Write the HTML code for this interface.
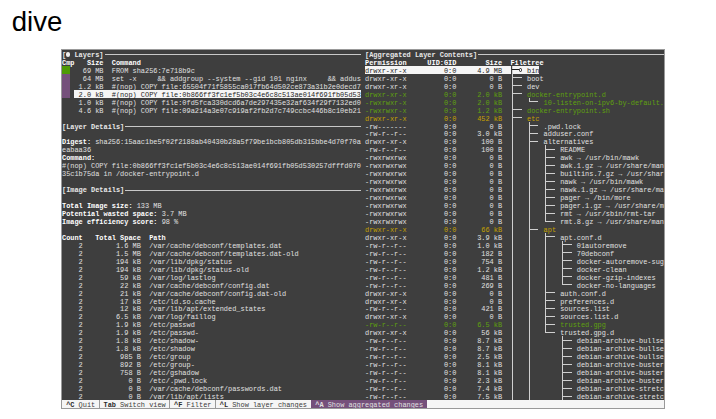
<!DOCTYPE html><html><head><meta charset="utf-8"><style>html,body{margin:0;padding:0;background:#fff;width:716px;height:419px;overflow:hidden}#title{position:absolute;left:11.70px;top:8.40px;font-family:"Liberation Sans",sans-serif;font-size:27.60px;color:#000;line-height:1;white-space:pre}#term{position:absolute;left:62.000px;top:50.000px;width:601.996px;height:358.020px;background:#3e3e3e;overflow:hidden}.r{position:absolute;left:0;height:7.956px;line-height:7.956px;white-space:pre;font-family:"Liberation Mono",monospace;font-size:7.300px}.s{position:absolute;top:0}.n{color:#e0e0e0}.b{color:#ffffff;font-weight:bold}.t{color:#e8e8e8;font-weight:bold}.h{color:#1e1e1e}.g{color:#5fa00f}.y{color:#c4a000}.sb{color:#2a2a2a;font-weight:bold}.sn{color:#3c3c3c}.pb{color:#e0e0e0;font-weight:bold}.pn{color:#e0e0e0}.q{position:absolute}</style></head><body><div id="title">dive</div><div style="position:absolute;left:61.000px;top:49.000px;width:603.996px;height:360.020px;background:#999"></div><div id="term"><div class="q" style="left:12.455px;top:39.780px;width:286.467px;height:7.956px;background:#f5f5f5"></div><div class="q" style="left:0.000px;top:15.912px;width:8.303px;height:7.956px;background:#4e9a06"></div><div class="q" style="left:0.000px;top:23.868px;width:8.303px;height:7.956px;background:#75507b"></div><div class="q" style="left:0.000px;top:31.824px;width:8.303px;height:7.956px;background:#75507b"></div><div class="q" style="left:0.000px;top:39.780px;width:8.303px;height:7.956px;background:#75507b"></div><div class="q" style="left:303.074px;top:15.912px;width:146.347px;height:7.956px;background:#f5f5f5"></div><div class="q" style="left:451.497px;top:15.912px;width:25.948px;height:7.956px;background:#f5f5f5"></div><div class="q" style="left:0.000px;top:350.064px;width:601.996px;height:7.956px;background:#f5f5f5"></div><div class="q" style="left:249.102px;top:350.064px;width:116.248px;height:7.956px;background:#75507b"></div><div class="q" style="left:42.517px;top:4.278px;width:256.405px;height:1.000px;background:#c8c8c8"></div><div class="q" style="left:63.276px;top:75.882px;width:235.647px;height:1.000px;background:#c8c8c8"></div><div class="q" style="left:63.276px;top:139.530px;width:235.647px;height:1.000px;background:#c8c8c8"></div><div class="q" style="left:416.170px;top:4.278px;width:185.826px;height:1.000px;background:#c8c8c8"></div><div class="q" style="left:449.959px;top:15.912px;width:1.000px;height:7.956px;background:#d0d0d0"></div><div class="q" style="left:449.959px;top:19.390px;width:6.728px;height:1.000px;background:#1e1e1e"></div><div class="q" style="left:449.959px;top:23.868px;width:1.000px;height:7.956px;background:#d0d0d0"></div><div class="q" style="left:449.959px;top:27.346px;width:9.879px;height:1.000px;background:#d0d0d0"></div><div class="q" style="left:449.959px;top:31.824px;width:1.000px;height:7.956px;background:#d0d0d0"></div><div class="q" style="left:449.959px;top:35.302px;width:9.879px;height:1.000px;background:#d0d0d0"></div><div class="q" style="left:449.959px;top:39.780px;width:1.000px;height:7.956px;background:#d0d0d0"></div><div class="q" style="left:449.959px;top:43.258px;width:9.879px;height:1.000px;background:#d0d0d0"></div><div class="q" style="left:449.959px;top:47.736px;width:1.000px;height:7.956px;background:#d0d0d0"></div><div class="q" style="left:466.566px;top:47.736px;width:1.000px;height:4.478px;background:#d0d0d0"></div><div class="q" style="left:466.566px;top:51.214px;width:9.879px;height:1.000px;background:#d0d0d0"></div><div class="q" style="left:449.959px;top:55.692px;width:1.000px;height:7.956px;background:#d0d0d0"></div><div class="q" style="left:449.959px;top:59.170px;width:9.879px;height:1.000px;background:#d0d0d0"></div><div class="q" style="left:449.959px;top:63.648px;width:1.000px;height:7.956px;background:#d0d0d0"></div><div class="q" style="left:449.959px;top:67.126px;width:9.879px;height:1.000px;background:#d0d0d0"></div><div class="q" style="left:449.959px;top:71.604px;width:1.000px;height:7.956px;background:#d0d0d0"></div><div class="q" style="left:466.566px;top:71.604px;width:1.000px;height:7.956px;background:#d0d0d0"></div><div class="q" style="left:466.566px;top:75.082px;width:9.879px;height:1.000px;background:#d0d0d0"></div><div class="q" style="left:449.959px;top:79.560px;width:1.000px;height:7.956px;background:#d0d0d0"></div><div class="q" style="left:466.566px;top:79.560px;width:1.000px;height:7.956px;background:#d0d0d0"></div><div class="q" style="left:466.566px;top:83.038px;width:9.879px;height:1.000px;background:#d0d0d0"></div><div class="q" style="left:449.959px;top:87.516px;width:1.000px;height:7.956px;background:#d0d0d0"></div><div class="q" style="left:466.566px;top:87.516px;width:1.000px;height:7.956px;background:#d0d0d0"></div><div class="q" style="left:466.566px;top:90.994px;width:9.879px;height:1.000px;background:#d0d0d0"></div><div class="q" style="left:449.959px;top:95.472px;width:1.000px;height:7.956px;background:#d0d0d0"></div><div class="q" style="left:466.566px;top:95.472px;width:1.000px;height:7.956px;background:#d0d0d0"></div><div class="q" style="left:483.173px;top:95.472px;width:1.000px;height:7.956px;background:#d0d0d0"></div><div class="q" style="left:483.173px;top:98.950px;width:9.879px;height:1.000px;background:#d0d0d0"></div><div class="q" style="left:449.959px;top:103.428px;width:1.000px;height:7.956px;background:#d0d0d0"></div><div class="q" style="left:466.566px;top:103.428px;width:1.000px;height:7.956px;background:#d0d0d0"></div><div class="q" style="left:483.173px;top:103.428px;width:1.000px;height:7.956px;background:#d0d0d0"></div><div class="q" style="left:483.173px;top:106.906px;width:9.879px;height:1.000px;background:#d0d0d0"></div><div class="q" style="left:449.959px;top:111.384px;width:1.000px;height:7.956px;background:#d0d0d0"></div><div class="q" style="left:466.566px;top:111.384px;width:1.000px;height:7.956px;background:#d0d0d0"></div><div class="q" style="left:483.173px;top:111.384px;width:1.000px;height:7.956px;background:#d0d0d0"></div><div class="q" style="left:483.173px;top:114.862px;width:9.879px;height:1.000px;background:#d0d0d0"></div><div class="q" style="left:449.959px;top:119.340px;width:1.000px;height:7.956px;background:#d0d0d0"></div><div class="q" style="left:466.566px;top:119.340px;width:1.000px;height:7.956px;background:#d0d0d0"></div><div class="q" style="left:483.173px;top:119.340px;width:1.000px;height:7.956px;background:#d0d0d0"></div><div class="q" style="left:483.173px;top:122.818px;width:9.879px;height:1.000px;background:#d0d0d0"></div><div class="q" style="left:449.959px;top:127.296px;width:1.000px;height:7.956px;background:#d0d0d0"></div><div class="q" style="left:466.566px;top:127.296px;width:1.000px;height:7.956px;background:#d0d0d0"></div><div class="q" style="left:483.173px;top:127.296px;width:1.000px;height:7.956px;background:#d0d0d0"></div><div class="q" style="left:483.173px;top:130.774px;width:9.879px;height:1.000px;background:#d0d0d0"></div><div class="q" style="left:449.959px;top:135.252px;width:1.000px;height:7.956px;background:#d0d0d0"></div><div class="q" style="left:466.566px;top:135.252px;width:1.000px;height:7.956px;background:#d0d0d0"></div><div class="q" style="left:483.173px;top:135.252px;width:1.000px;height:7.956px;background:#d0d0d0"></div><div class="q" style="left:483.173px;top:138.730px;width:9.879px;height:1.000px;background:#d0d0d0"></div><div class="q" style="left:449.959px;top:143.208px;width:1.000px;height:7.956px;background:#d0d0d0"></div><div class="q" style="left:466.566px;top:143.208px;width:1.000px;height:7.956px;background:#d0d0d0"></div><div class="q" style="left:483.173px;top:143.208px;width:1.000px;height:7.956px;background:#d0d0d0"></div><div class="q" style="left:483.173px;top:146.686px;width:9.879px;height:1.000px;background:#d0d0d0"></div><div class="q" style="left:449.959px;top:151.164px;width:1.000px;height:7.956px;background:#d0d0d0"></div><div class="q" style="left:466.566px;top:151.164px;width:1.000px;height:7.956px;background:#d0d0d0"></div><div class="q" style="left:483.173px;top:151.164px;width:1.000px;height:7.956px;background:#d0d0d0"></div><div class="q" style="left:483.173px;top:154.642px;width:9.879px;height:1.000px;background:#d0d0d0"></div><div class="q" style="left:449.959px;top:159.120px;width:1.000px;height:7.956px;background:#d0d0d0"></div><div class="q" style="left:466.566px;top:159.120px;width:1.000px;height:7.956px;background:#d0d0d0"></div><div class="q" style="left:483.173px;top:159.120px;width:1.000px;height:7.956px;background:#d0d0d0"></div><div class="q" style="left:483.173px;top:162.598px;width:9.879px;height:1.000px;background:#d0d0d0"></div><div class="q" style="left:449.959px;top:167.076px;width:1.000px;height:7.956px;background:#d0d0d0"></div><div class="q" style="left:466.566px;top:167.076px;width:1.000px;height:7.956px;background:#d0d0d0"></div><div class="q" style="left:483.173px;top:167.076px;width:1.000px;height:4.478px;background:#d0d0d0"></div><div class="q" style="left:483.173px;top:170.554px;width:9.879px;height:1.000px;background:#d0d0d0"></div><div class="q" style="left:449.959px;top:175.032px;width:1.000px;height:7.956px;background:#d0d0d0"></div><div class="q" style="left:466.566px;top:175.032px;width:1.000px;height:7.956px;background:#d0d0d0"></div><div class="q" style="left:466.566px;top:178.510px;width:9.879px;height:1.000px;background:#d0d0d0"></div><div class="q" style="left:449.959px;top:182.988px;width:1.000px;height:7.956px;background:#d0d0d0"></div><div class="q" style="left:466.566px;top:182.988px;width:1.000px;height:7.956px;background:#d0d0d0"></div><div class="q" style="left:483.173px;top:182.988px;width:1.000px;height:7.956px;background:#d0d0d0"></div><div class="q" style="left:483.173px;top:186.466px;width:9.879px;height:1.000px;background:#d0d0d0"></div><div class="q" style="left:449.959px;top:190.944px;width:1.000px;height:7.956px;background:#d0d0d0"></div><div class="q" style="left:466.566px;top:190.944px;width:1.000px;height:7.956px;background:#d0d0d0"></div><div class="q" style="left:483.173px;top:190.944px;width:1.000px;height:7.956px;background:#d0d0d0"></div><div class="q" style="left:499.780px;top:190.944px;width:1.000px;height:7.956px;background:#d0d0d0"></div><div class="q" style="left:499.780px;top:194.422px;width:9.879px;height:1.000px;background:#d0d0d0"></div><div class="q" style="left:449.959px;top:198.900px;width:1.000px;height:7.956px;background:#d0d0d0"></div><div class="q" style="left:466.566px;top:198.900px;width:1.000px;height:7.956px;background:#d0d0d0"></div><div class="q" style="left:483.173px;top:198.900px;width:1.000px;height:7.956px;background:#d0d0d0"></div><div class="q" style="left:499.780px;top:198.900px;width:1.000px;height:7.956px;background:#d0d0d0"></div><div class="q" style="left:499.780px;top:202.378px;width:9.879px;height:1.000px;background:#d0d0d0"></div><div class="q" style="left:449.959px;top:206.856px;width:1.000px;height:7.956px;background:#d0d0d0"></div><div class="q" style="left:466.566px;top:206.856px;width:1.000px;height:7.956px;background:#d0d0d0"></div><div class="q" style="left:483.173px;top:206.856px;width:1.000px;height:7.956px;background:#d0d0d0"></div><div class="q" style="left:499.780px;top:206.856px;width:1.000px;height:7.956px;background:#d0d0d0"></div><div class="q" style="left:499.780px;top:210.334px;width:9.879px;height:1.000px;background:#d0d0d0"></div><div class="q" style="left:449.959px;top:214.812px;width:1.000px;height:7.956px;background:#d0d0d0"></div><div class="q" style="left:466.566px;top:214.812px;width:1.000px;height:7.956px;background:#d0d0d0"></div><div class="q" style="left:483.173px;top:214.812px;width:1.000px;height:7.956px;background:#d0d0d0"></div><div class="q" style="left:499.780px;top:214.812px;width:1.000px;height:7.956px;background:#d0d0d0"></div><div class="q" style="left:499.780px;top:218.290px;width:9.879px;height:1.000px;background:#d0d0d0"></div><div class="q" style="left:449.959px;top:222.768px;width:1.000px;height:7.956px;background:#d0d0d0"></div><div class="q" style="left:466.566px;top:222.768px;width:1.000px;height:7.956px;background:#d0d0d0"></div><div class="q" style="left:483.173px;top:222.768px;width:1.000px;height:7.956px;background:#d0d0d0"></div><div class="q" style="left:499.780px;top:222.768px;width:1.000px;height:7.956px;background:#d0d0d0"></div><div class="q" style="left:499.780px;top:226.246px;width:9.879px;height:1.000px;background:#d0d0d0"></div><div class="q" style="left:449.959px;top:230.724px;width:1.000px;height:7.956px;background:#d0d0d0"></div><div class="q" style="left:466.566px;top:230.724px;width:1.000px;height:7.956px;background:#d0d0d0"></div><div class="q" style="left:483.173px;top:230.724px;width:1.000px;height:7.956px;background:#d0d0d0"></div><div class="q" style="left:499.780px;top:230.724px;width:1.000px;height:4.478px;background:#d0d0d0"></div><div class="q" style="left:499.780px;top:234.202px;width:9.879px;height:1.000px;background:#d0d0d0"></div><div class="q" style="left:449.959px;top:238.680px;width:1.000px;height:7.956px;background:#d0d0d0"></div><div class="q" style="left:466.566px;top:238.680px;width:1.000px;height:7.956px;background:#d0d0d0"></div><div class="q" style="left:483.173px;top:238.680px;width:1.000px;height:7.956px;background:#d0d0d0"></div><div class="q" style="left:483.173px;top:242.158px;width:9.879px;height:1.000px;background:#d0d0d0"></div><div class="q" style="left:449.959px;top:246.636px;width:1.000px;height:7.956px;background:#d0d0d0"></div><div class="q" style="left:466.566px;top:246.636px;width:1.000px;height:7.956px;background:#d0d0d0"></div><div class="q" style="left:483.173px;top:246.636px;width:1.000px;height:7.956px;background:#d0d0d0"></div><div class="q" style="left:483.173px;top:250.114px;width:9.879px;height:1.000px;background:#d0d0d0"></div><div class="q" style="left:449.959px;top:254.592px;width:1.000px;height:7.956px;background:#d0d0d0"></div><div class="q" style="left:466.566px;top:254.592px;width:1.000px;height:7.956px;background:#d0d0d0"></div><div class="q" style="left:483.173px;top:254.592px;width:1.000px;height:7.956px;background:#d0d0d0"></div><div class="q" style="left:483.173px;top:258.070px;width:9.879px;height:1.000px;background:#d0d0d0"></div><div class="q" style="left:449.959px;top:262.548px;width:1.000px;height:7.956px;background:#d0d0d0"></div><div class="q" style="left:466.566px;top:262.548px;width:1.000px;height:7.956px;background:#d0d0d0"></div><div class="q" style="left:483.173px;top:262.548px;width:1.000px;height:7.956px;background:#d0d0d0"></div><div class="q" style="left:483.173px;top:266.026px;width:9.879px;height:1.000px;background:#d0d0d0"></div><div class="q" style="left:449.959px;top:270.504px;width:1.000px;height:7.956px;background:#d0d0d0"></div><div class="q" style="left:466.566px;top:270.504px;width:1.000px;height:7.956px;background:#d0d0d0"></div><div class="q" style="left:483.173px;top:270.504px;width:1.000px;height:7.956px;background:#d0d0d0"></div><div class="q" style="left:483.173px;top:273.982px;width:9.879px;height:1.000px;background:#d0d0d0"></div><div class="q" style="left:449.959px;top:278.460px;width:1.000px;height:7.956px;background:#d0d0d0"></div><div class="q" style="left:466.566px;top:278.460px;width:1.000px;height:7.956px;background:#d0d0d0"></div><div class="q" style="left:483.173px;top:278.460px;width:1.000px;height:4.478px;background:#d0d0d0"></div><div class="q" style="left:483.173px;top:281.938px;width:9.879px;height:1.000px;background:#d0d0d0"></div><div class="q" style="left:449.959px;top:286.416px;width:1.000px;height:7.956px;background:#d0d0d0"></div><div class="q" style="left:466.566px;top:286.416px;width:1.000px;height:7.956px;background:#d0d0d0"></div><div class="q" style="left:499.780px;top:286.416px;width:1.000px;height:7.956px;background:#d0d0d0"></div><div class="q" style="left:499.780px;top:289.894px;width:9.879px;height:1.000px;background:#d0d0d0"></div><div class="q" style="left:449.959px;top:294.372px;width:1.000px;height:7.956px;background:#d0d0d0"></div><div class="q" style="left:466.566px;top:294.372px;width:1.000px;height:7.956px;background:#d0d0d0"></div><div class="q" style="left:499.780px;top:294.372px;width:1.000px;height:7.956px;background:#d0d0d0"></div><div class="q" style="left:499.780px;top:297.850px;width:9.879px;height:1.000px;background:#d0d0d0"></div><div class="q" style="left:449.959px;top:302.328px;width:1.000px;height:7.956px;background:#d0d0d0"></div><div class="q" style="left:466.566px;top:302.328px;width:1.000px;height:7.956px;background:#d0d0d0"></div><div class="q" style="left:499.780px;top:302.328px;width:1.000px;height:7.956px;background:#d0d0d0"></div><div class="q" style="left:499.780px;top:305.806px;width:9.879px;height:1.000px;background:#d0d0d0"></div><div class="q" style="left:449.959px;top:310.284px;width:1.000px;height:7.956px;background:#d0d0d0"></div><div class="q" style="left:466.566px;top:310.284px;width:1.000px;height:7.956px;background:#d0d0d0"></div><div class="q" style="left:499.780px;top:310.284px;width:1.000px;height:7.956px;background:#d0d0d0"></div><div class="q" style="left:499.780px;top:313.762px;width:9.879px;height:1.000px;background:#d0d0d0"></div><div class="q" style="left:449.959px;top:318.240px;width:1.000px;height:7.956px;background:#d0d0d0"></div><div class="q" style="left:466.566px;top:318.240px;width:1.000px;height:7.956px;background:#d0d0d0"></div><div class="q" style="left:499.780px;top:318.240px;width:1.000px;height:7.956px;background:#d0d0d0"></div><div class="q" style="left:499.780px;top:321.718px;width:9.879px;height:1.000px;background:#d0d0d0"></div><div class="q" style="left:449.959px;top:326.196px;width:1.000px;height:7.956px;background:#d0d0d0"></div><div class="q" style="left:466.566px;top:326.196px;width:1.000px;height:7.956px;background:#d0d0d0"></div><div class="q" style="left:499.780px;top:326.196px;width:1.000px;height:7.956px;background:#d0d0d0"></div><div class="q" style="left:499.780px;top:329.674px;width:9.879px;height:1.000px;background:#d0d0d0"></div><div class="q" style="left:449.959px;top:334.152px;width:1.000px;height:7.956px;background:#d0d0d0"></div><div class="q" style="left:466.566px;top:334.152px;width:1.000px;height:7.956px;background:#d0d0d0"></div><div class="q" style="left:499.780px;top:334.152px;width:1.000px;height:7.956px;background:#d0d0d0"></div><div class="q" style="left:499.780px;top:337.630px;width:9.879px;height:1.000px;background:#d0d0d0"></div><div class="q" style="left:449.959px;top:342.108px;width:1.000px;height:7.956px;background:#d0d0d0"></div><div class="q" style="left:466.566px;top:342.108px;width:1.000px;height:7.956px;background:#d0d0d0"></div><div class="q" style="left:499.780px;top:342.108px;width:1.000px;height:7.956px;background:#d0d0d0"></div><div class="q" style="left:499.780px;top:345.586px;width:9.879px;height:1.000px;background:#d0d0d0"></div><div class="q" style="left:3.728px;top:2.378px;width:4.400px;height:4.400px;background:#f0f0f0;border-radius:50%"></div><div class="q" style="left:457.063px;top:18.190px;width:3.400px;height:3.400px;border:0.90px solid #1e1e1e;border-radius:50%;box-sizing:border-box"></div><div class="q" style="left:36.865px;top:350.064px;width:1.000px;height:7.956px;background:#9a9a9a"></div><div class="q" style="left:107.444px;top:350.064px;width:1.000px;height:7.956px;background:#9a9a9a"></div><div class="q" style="left:153.113px;top:350.064px;width:1.000px;height:7.956px;background:#9a9a9a"></div><div style="position:absolute;left:0;top:0;width:2000px;height:400px;transform-origin:0 0;transform:scale(0.94788,1.00000)"><div class="r" style="top:1.900px"><span class="s t" style="left:0.000px">[  Layers]</span><span class="s t" style="left:319.740px">[Aggregated Layer Contents]</span></div><div class="r" style="top:9.856px"><span class="s b" style="left:0.000px">Cmp</span><span class="s b" style="left:26.280px">Size</span><span class="s b" style="left:52.560px">Command</span><span class="s b" style="left:319.740px">Permission</span><span class="s b" style="left:385.440px">UID:GID</span><span class="s b" style="left:446.760px">Size</span><span class="s b" style="left:473.040px">Filetree</span></div><div class="r" style="top:17.812px"><span class="s n" style="left:13.140px">  69 MB  FROM sha256:7e718b9c</span><span class="s h" style="left:319.740px">drwxr-xr-x         0:0     4.9 MB</span><span class="s h" style="left:490.560px">bin</span></div><div class="r" style="top:25.768px"><span class="s n" style="left:13.140px">  64 MB  set -x     &amp;&amp; addgroup --system --gid 101 nginx     &amp;&amp; addus</span><span class="s n" style="left:319.740px">drwxr-xr-x         0:0        0 B</span><span class="s n" style="left:490.560px">boot</span></div><div class="r" style="top:33.724px"><span class="s n" style="left:13.140px"> 1.2 kB  #(nop) COPY file:65504f71f5855ca017fb64d502ce873a31b2e0decd7</span><span class="s n" style="left:319.740px">drwxr-xr-x         0:0        0 B</span><span class="s n" style="left:490.560px">dev</span></div><div class="r" style="top:41.680px"><span class="s h" style="left:13.140px"> 2.0 kB  #(nop) COPY file:0b866ff3fc1ef5b03c4e6c8c513ae014f691fb05d53</span><span class="s g" style="left:319.740px">drwxr-xr-x         0:0     2.0 kB</span><span class="s g" style="left:490.560px">docker-entrypoint.d</span></div><div class="r" style="top:49.636px"><span class="s n" style="left:13.140px"> 1.0 kB  #(nop) COPY file:0fd5fca330dcd6a7de297435e32af634f29f7132ed0</span><span class="s g" style="left:319.740px">-rwxrwxr-x         0:0     2.0 kB</span><span class="s g" style="left:508.080px">10-listen-on-ipv6-by-default.</span></div><div class="r" style="top:57.592px"><span class="s n" style="left:13.140px"> 4.6 kB  #(nop) COPY file:09a214a3e07c919af2fb2d7c749ccbc446b8c10eb21</span><span class="s g" style="left:319.740px">-rwxrwxr-x         0:0     1.2 kB</span><span class="s g" style="left:490.560px">docker-entrypoint.sh</span></div><div class="r" style="top:65.548px"><span class="s y" style="left:319.740px">drwxr-xr-x         0:0     452 kB</span><span class="s y" style="left:490.560px">etc</span></div><div class="r" style="top:73.504px"><span class="s t" style="left:0.000px">[Layer Details]</span><span class="s n" style="left:319.740px">-rw-------         0:0        0 B</span><span class="s n" style="left:508.080px">.pwd.lock</span></div><div class="r" style="top:81.460px"><span class="s n" style="left:319.740px">-rw-r--r--         0:0     3.0 kB</span><span class="s n" style="left:508.080px">adduser.conf</span></div><div class="r" style="top:89.416px"><span class="s b" style="left:0.000px">Digest:</span><span class="s n" style="left:35.040px">sha256:15aac1be5f02f2188ab40430b28a5f79be1bcb805db315bbe4d70f70a</span><span class="s n" style="left:319.740px">drwxr-xr-x         0:0      100 B</span><span class="s n" style="left:508.080px">alternatives</span></div><div class="r" style="top:97.372px"><span class="s n" style="left:0.000px">eabaa36</span><span class="s n" style="left:319.740px">-rw-r--r--         0:0      100 B</span><span class="s n" style="left:525.600px">README</span></div><div class="r" style="top:105.328px"><span class="s b" style="left:0.000px">Command:</span><span class="s n" style="left:319.740px">-rwxrwxrwx         0:0        0 B</span><span class="s n" style="left:525.600px">awk → /usr/bin/mawk</span></div><div class="r" style="top:113.284px"><span class="s n" style="left:0.000px">#(nop) COPY file:0b866ff3fc1ef5b03c4e6c8c513ae014f691fb05d530257dfffd070</span><span class="s n" style="left:319.740px">-rwxrwxrwx         0:0        0 B</span><span class="s n" style="left:525.600px">awk.1.gz → /usr/share/man</span></div><div class="r" style="top:121.240px"><span class="s n" style="left:0.000px">35c1b75da in /docker-entrypoint.d</span><span class="s n" style="left:319.740px">-rwxrwxrwx         0:0        0 B</span><span class="s n" style="left:525.600px">builtins.7.gz → /usr/shar</span></div><div class="r" style="top:129.196px"><span class="s n" style="left:319.740px">-rwxrwxrwx         0:0        0 B</span><span class="s n" style="left:525.600px">nawk → /usr/bin/mawk</span></div><div class="r" style="top:137.152px"><span class="s t" style="left:0.000px">[Image Details]</span><span class="s n" style="left:319.740px">-rwxrwxrwx         0:0        0 B</span><span class="s n" style="left:525.600px">nawk.1.gz → /usr/share/ma</span></div><div class="r" style="top:145.108px"><span class="s n" style="left:319.740px">-rwxrwxrwx         0:0        0 B</span><span class="s n" style="left:525.600px">pager → /bin/more</span></div><div class="r" style="top:153.064px"><span class="s b" style="left:0.000px">Total Image size:</span><span class="s n" style="left:78.840px">133 MB</span><span class="s n" style="left:319.740px">-rwxrwxrwx         0:0        0 B</span><span class="s n" style="left:525.600px">pager.1.gz → /usr/share/m</span></div><div class="r" style="top:161.020px"><span class="s b" style="left:0.000px">Potential wasted space:</span><span class="s n" style="left:105.120px">3.7 MB</span><span class="s n" style="left:319.740px">-rwxrwxrwx         0:0        0 B</span><span class="s n" style="left:525.600px">rmt → /usr/sbin/rmt-tar</span></div><div class="r" style="top:168.976px"><span class="s b" style="left:0.000px">Image efficiency score:</span><span class="s n" style="left:105.120px">98 %</span><span class="s n" style="left:319.740px">-rwxrwxrwx         0:0        0 B</span><span class="s n" style="left:525.600px">rmt.8.gz → /usr/share/man</span></div><div class="r" style="top:176.932px"><span class="s y" style="left:319.740px">drwxr-xr-x         0:0      66 kB</span><span class="s y" style="left:508.080px">apt</span></div><div class="r" style="top:184.888px"><span class="s b" style="left:0.000px">Count   Total Space  Path</span><span class="s n" style="left:319.740px">drwxr-xr-x         0:0     3.9 kB</span><span class="s n" style="left:525.600px">apt.conf.d</span></div><div class="r" style="top:192.844px"><span class="s n" style="left:0.000px">    2        1.6 MB  /var/cache/debconf/templates.dat</span><span class="s n" style="left:319.740px">-rw-r--r--         0:0     1.0 kB</span><span class="s n" style="left:543.120px">01autoremove</span></div><div class="r" style="top:200.800px"><span class="s n" style="left:0.000px">    2        1.5 MB  /var/cache/debconf/templates.dat-old</span><span class="s n" style="left:319.740px">-rw-r--r--         0:0      182 B</span><span class="s n" style="left:543.120px">70debconf</span></div><div class="r" style="top:208.756px"><span class="s n" style="left:0.000px">    2        194 kB  /var/lib/dpkg/status</span><span class="s n" style="left:319.740px">-rw-r--r--         0:0      754 B</span><span class="s n" style="left:543.120px">docker-autoremove-sug</span></div><div class="r" style="top:216.712px"><span class="s n" style="left:0.000px">    2        194 kB  /var/lib/dpkg/status-old</span><span class="s n" style="left:319.740px">-rw-r--r--         0:0     1.2 kB</span><span class="s n" style="left:543.120px">docker-clean</span></div><div class="r" style="top:224.668px"><span class="s n" style="left:0.000px">    2         59 kB  /var/log/lastlog</span><span class="s n" style="left:319.740px">-rw-r--r--         0:0      481 B</span><span class="s n" style="left:543.120px">docker-gzip-indexes</span></div><div class="r" style="top:232.624px"><span class="s n" style="left:0.000px">    2         22 kB  /var/cache/debconf/config.dat</span><span class="s n" style="left:319.740px">-rw-r--r--         0:0      269 B</span><span class="s n" style="left:543.120px">docker-no-languages</span></div><div class="r" style="top:240.580px"><span class="s n" style="left:0.000px">    2         21 kB  /var/cache/debconf/config.dat-old</span><span class="s n" style="left:319.740px">drwxr-xr-x         0:0        0 B</span><span class="s n" style="left:525.600px">auth.conf.d</span></div><div class="r" style="top:248.536px"><span class="s n" style="left:0.000px">    2         17 kB  /etc/ld.so.cache</span><span class="s n" style="left:319.740px">drwxr-xr-x         0:0        0 B</span><span class="s n" style="left:525.600px">preferences.d</span></div><div class="r" style="top:256.492px"><span class="s n" style="left:0.000px">    2         12 kB  /var/lib/apt/extended_states</span><span class="s n" style="left:319.740px">-rw-r--r--         0:0      421 B</span><span class="s n" style="left:525.600px">sources.list</span></div><div class="r" style="top:264.448px"><span class="s n" style="left:0.000px">    2        6.5 kB  /var/log/faillog</span><span class="s n" style="left:319.740px">drwxr-xr-x         0:0        0 B</span><span class="s n" style="left:525.600px">sources.list.d</span></div><div class="r" style="top:272.404px"><span class="s n" style="left:0.000px">    2        1.9 kB  /etc/passwd</span><span class="s g" style="left:319.740px">-rw-r--r--         0:0     6.5 kB</span><span class="s g" style="left:525.600px">trusted.gpg</span></div><div class="r" style="top:280.360px"><span class="s n" style="left:0.000px">    2        1.9 kB  /etc/passwd-</span><span class="s n" style="left:319.740px">drwxr-xr-x         0:0      56 kB</span><span class="s n" style="left:525.600px">trusted.gpg.d</span></div><div class="r" style="top:288.316px"><span class="s n" style="left:0.000px">    2        1.8 kB  /etc/shadow-</span><span class="s n" style="left:319.740px">-rw-r--r--         0:0     8.7 kB</span><span class="s n" style="left:543.120px">debian-archive-bullse</span></div><div class="r" style="top:296.272px"><span class="s n" style="left:0.000px">    2        1.8 kB  /etc/shadow</span><span class="s n" style="left:319.740px">-rw-r--r--         0:0     8.7 kB</span><span class="s n" style="left:543.120px">debian-archive-bullse</span></div><div class="r" style="top:304.228px"><span class="s n" style="left:0.000px">    2         985 B  /etc/group</span><span class="s n" style="left:319.740px">-rw-r--r--         0:0     2.5 kB</span><span class="s n" style="left:543.120px">debian-archive-bullse</span></div><div class="r" style="top:312.184px"><span class="s n" style="left:0.000px">    2         892 B  /etc/group-</span><span class="s n" style="left:319.740px">-rw-r--r--         0:0     8.1 kB</span><span class="s n" style="left:543.120px">debian-archive-buster</span></div><div class="r" style="top:320.140px"><span class="s n" style="left:0.000px">    2         758 B  /etc/gshadow</span><span class="s n" style="left:319.740px">-rw-r--r--         0:0     8.1 kB</span><span class="s n" style="left:543.120px">debian-archive-buster</span></div><div class="r" style="top:328.096px"><span class="s n" style="left:0.000px">    2           0 B  /etc/.pwd.lock</span><span class="s n" style="left:319.740px">-rw-r--r--         0:0     2.3 kB</span><span class="s n" style="left:543.120px">debian-archive-buster</span></div><div class="r" style="top:336.052px"><span class="s n" style="left:0.000px">    2           0 B  /var/cache/debconf/passwords.dat</span><span class="s n" style="left:319.740px">-rw-r--r--         0:0     7.4 kB</span><span class="s n" style="left:543.120px">debian-archive-stretc</span></div><div class="r" style="top:344.008px"><span class="s n" style="left:0.000px">    2           0 B  /var/lib/apt/lists</span><span class="s n" style="left:319.740px">-rw-r--r--         0:0     7.5 kB</span><span class="s n" style="left:543.120px">debian-archive-stretc</span></div><div class="r" style="top:351.964px"><span class="s sb" style="left:4.380px">^C</span><span class="s sn" style="left:17.520px">Quit</span><span class="s sb" style="left:43.800px">Tab</span><span class="s sn" style="left:61.320px">Switch view</span><span class="s sb" style="left:118.260px">^F</span><span class="s sn" style="left:131.400px">Filter</span><span class="s sb" style="left:166.440px">^L</span><span class="s sn" style="left:179.580px">Show layer changes</span><span class="s pb" style="left:267.180px">^A</span><span class="s pn" style="left:280.320px">Show aggregated changes</span></div></div></div></body></html>
